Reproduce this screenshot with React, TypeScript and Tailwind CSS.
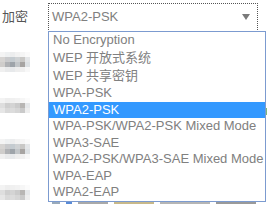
import React from 'react'

const options = [
  'No Encryption',
  'WEP 开放式系统',
  'WEP 共享密钥',
  'WPA-PSK',
  'WPA2-PSK',
  'WPA-PSK/WPA2-PSK Mixed Mode',
  'WPA3-SAE',
  'WPA2-PSK/WPA3-SAE Mixed Mode',
  'WPA-EAP',
  'WPA2-EAP',
]

const selected = 'WPA2-PSK'

// rows with CJK text come out taller in the native list
const hasCjk = (s: string) => /[\u4e00-\u9fff]/.test(s)

// blurred (mosaic) label placeholder from the form behind the dropdown
function Mosaic({ rows }: { rows: string[][] }) {
  return (
    <div className="flex flex-col">
      {rows.map((r, i) => (
        <div key={i} className="flex">
          {r.map((c, j) => (
            <div key={j} className="w-[5px] h-[5px]" style={{ backgroundColor: c }} />
          ))}
        </div>
      ))}
    </div>
  )
}

const blurA = [
  ['#f4f4f4', '#eef0f1', '#ecedee', '#f2f2f2', '#f5f5f5', '#fafafa'],
  ['#d6d4d2', '#c9cacc', '#c4cbd0', '#cfd2d4', '#c9c8c6', '#e4e6e8'],
  ['#cfcdcb', '#b0b2b5', '#9ea4aa', '#c2c6c9', '#a7a4a2', '#dde1e4'],
  ['#f0f0f0', '#e9eaeb', '#e7e9eb', '#eeeeee', '#f0f0f0', '#f8f8f8'],
]

const blurB = [
  ['#f3f3f3', '#eeeeee', '#f0f0f0', '#f2f2f2', '#f6f6f6', '#fbfbfb'],
  ['#dedede', '#cfcfcf', '#d4d4d4', '#cbcbcb', '#b8b6b4', '#e6e8ea'],
  ['#e6e6e6', '#d9d9d9', '#dcdcdc', '#d6d6d6', '#cacaca', '#eeeeee'],
]

export default function App() {
  return (
    <div
      className="relative w-[267px] h-[204px] bg-white overflow-hidden"
      style={{ fontFamily: '"Liberation Sans", Arial, "Noto Sans CJK SC", sans-serif' }}
    >
      <div className="flex flex-col">
        <div className="flex items-center h-[32px] pt-[2px]">
          <span className="w-[48px] pl-[2px] text-[13px] text-[#555]">加密</span>
          <div className="w-[210px] h-[29px] border border-dotted border-[#555] flex items-center justify-between pl-[3px] pr-[7px]">
            <span className="text-[13px] text-[#808080]">{selected}</span>
            <svg width="8" height="6" viewBox="0 0 8 6">
              <path d="M0 0h8L4 6z" fill="#7a7a7a" />
            </svg>
          </div>
        </div>

        <div className="flex flex-col gap-[26px] mt-[20px]">
          <Mosaic rows={blurA} />
          <Mosaic rows={blurB} />
          <Mosaic rows={blurA} />
          <Mosaic rows={blurB} />
        </div>
      </div>

      {/* things behind the list peeking out */}
      <div className="absolute left-[264px] top-[108px] w-[3px] h-[7px] bg-[#7fb87a]" />
      <div className="absolute left-[265px] top-[154px] w-[2px] h-[9px] border-l border-dotted border-[#666]" />
      <div className="absolute left-[52px] top-[202px] flex gap-[6px]">
        <div className="w-[8px] h-[2px] bg-[#9ab]" />
        <div className="w-[6px] h-[2px] bg-[#5a8bd6]" />
        <div className="w-[30px] h-[2px] bg-[#a9a9a9]" />
        <div className="w-[40px] h-[2px] bg-[#c7b88a]" />
        <div className="w-[50px] h-[2px] bg-[#b5b5b5]" />
        <div className="w-[40px] h-[2px] bg-[#9a9a9a]" />
      </div>

      {/* open dropdown list */}
      <div className="absolute left-[48px] top-[31px] w-[218px] bg-white border border-[#7c9bd0]">
        {options.map((o) => {
          const size = hasCjk(o) ? 'h-[18.25px] leading-[18.25px]' : 'h-[16.5px] leading-[16.5px]'
          const tone = o === selected ? 'bg-[#3399ff] text-white' : 'text-[#808080]'
          return (
            <div key={o} className={`${size} ${tone} pl-[4px] text-[13px] whitespace-nowrap`}>
              {o}
            </div>
          )
        })}
      </div>
    </div>
  )
}
